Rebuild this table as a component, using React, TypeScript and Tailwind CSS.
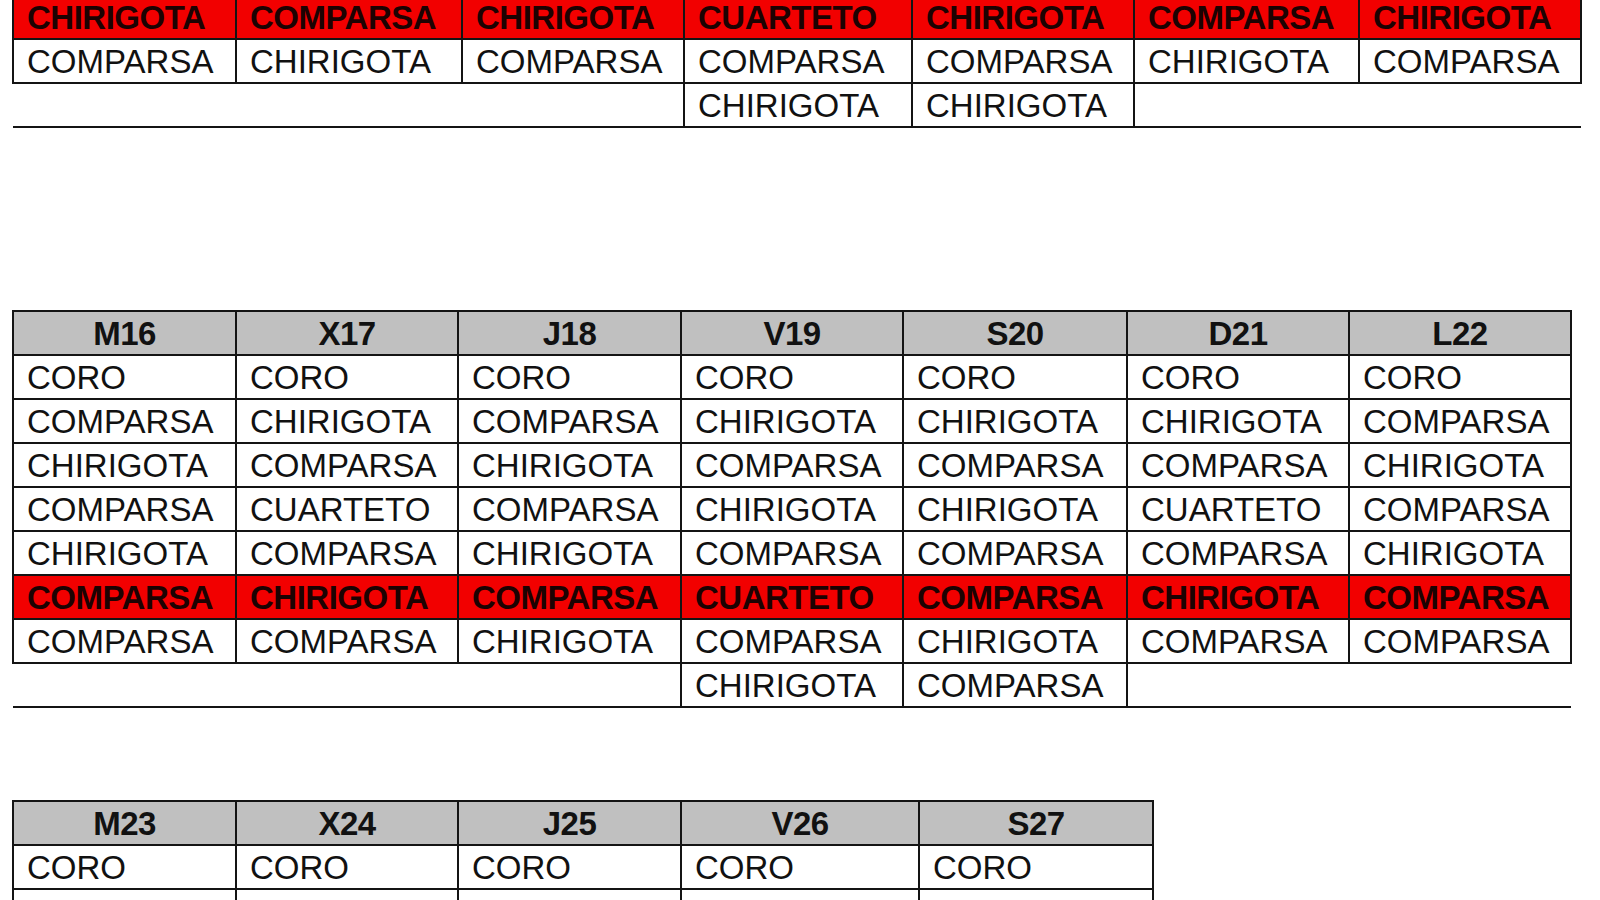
import React from 'react';

type Row = { cells: string[]; kind?: 'head' | 'red' | 'plain' | 'tail' };

interface DayTableProps {
  widths: number[];
  rows: Row[];
  className?: string;
}

const FONT = { fontFamily: '"Liberation Sans", Arial, sans-serif' };

const DayTable: React.FC<DayTableProps> = ({ widths, rows, className }) => {
  return (
    <table className={`border-collapse table-fixed ${className ?? ''}`} style={FONT}>
      <colgroup>
        {widths.map((w, i) => (
          <col key={i} style={{ width: w }} />
        ))}
      </colgroup>
      <tbody>
        {rows.map((row, r) => (
          <tr key={r} className="h-[44px]">
            {row.cells.map((text, c) => {
              if (row.kind === 'tail' && !text) {
                return <td key={c} className="border-b-2 border-[#141414] p-0" />;
              }
              if (row.kind === 'head') {
                return (
                  <td
                    key={c}
                    className="border-2 border-[#141414] bg-[#c0c0c0] p-0 pt-[2px] text-center text-[33px] font-bold leading-[40px] tracking-[-0.5px] text-[#111]"
                  >
                    {text}
                  </td>
                );
              }
              if (row.kind === 'red') {
                return (
                  <td
                    key={c}
                    className="border-2 border-[#141414] bg-[#f20000] p-0 pl-[13px] pt-[2px] whitespace-nowrap text-[33px] font-bold leading-[40px] tracking-[-0.5px] text-[#1c0202]"
                  >
                    {text}
                  </td>
                );
              }
              return (
                <td
                  key={c}
                  className="border-2 border-[#141414] bg-white p-0 pl-[13px] pt-[2px] whitespace-nowrap text-[33px] leading-[40px] text-[#111]"
                >
                  {text}
                </td>
              );
            })}
          </tr>
        ))}
      </tbody>
    </table>
  );
};

const topRows: Row[] = [
  { kind: 'red', cells: ['CHIRIGOTA', 'COMPARSA', 'CHIRIGOTA', 'CUARTETO', 'CHIRIGOTA', 'COMPARSA', 'CHIRIGOTA'] },
  { cells: ['COMPARSA', 'CHIRIGOTA', 'COMPARSA', 'COMPARSA', 'COMPARSA', 'CHIRIGOTA', 'COMPARSA'] },
  { kind: 'tail', cells: ['', '', '', 'CHIRIGOTA', 'CHIRIGOTA', '', ''] },
];

const midRows: Row[] = [
  { kind: 'head', cells: ['M16', 'X17', 'J18', 'V19', 'S20', 'D21', 'L22'] },
  { cells: ['CORO', 'CORO', 'CORO', 'CORO', 'CORO', 'CORO', 'CORO'] },
  { cells: ['COMPARSA', 'CHIRIGOTA', 'COMPARSA', 'CHIRIGOTA', 'CHIRIGOTA', 'CHIRIGOTA', 'COMPARSA'] },
  { cells: ['CHIRIGOTA', 'COMPARSA', 'CHIRIGOTA', 'COMPARSA', 'COMPARSA', 'COMPARSA', 'CHIRIGOTA'] },
  { cells: ['COMPARSA', 'CUARTETO', 'COMPARSA', 'CHIRIGOTA', 'CHIRIGOTA', 'CUARTETO', 'COMPARSA'] },
  { cells: ['CHIRIGOTA', 'COMPARSA', 'CHIRIGOTA', 'COMPARSA', 'COMPARSA', 'COMPARSA', 'CHIRIGOTA'] },
  { kind: 'red', cells: ['COMPARSA', 'CHIRIGOTA', 'COMPARSA', 'CUARTETO', 'COMPARSA', 'CHIRIGOTA', 'COMPARSA'] },
  { cells: ['COMPARSA', 'COMPARSA', 'CHIRIGOTA', 'COMPARSA', 'CHIRIGOTA', 'COMPARSA', 'COMPARSA'] },
  { kind: 'tail', cells: ['', '', '', 'CHIRIGOTA', 'COMPARSA', '', ''] },
];

const lowRows: Row[] = [
  { kind: 'head', cells: ['M23', 'X24', 'J25', 'V26', 'S27'] },
  { cells: ['CORO', 'CORO', 'CORO', 'CORO', 'CORO'] },
  { cells: ['CHIRIGOTA', 'COMPARSA', 'CHIRIGOTA', 'CHIRIGOTA', 'COMPARSA'] },
  { cells: ['COMPARSA', 'CHIRIGOTA', 'COMPARSA', 'COMPARSA', 'CHIRIGOTA'] },
];

export default function App() {
  return (
    <div className="h-[900px] w-[1600px] overflow-hidden bg-white pl-[12px]">
      <DayTable className="-mt-[6px]" widths={[223, 226, 222, 228, 222, 225, 222]} rows={topRows} />
      <DayTable className="mt-[182px]" widths={[223, 222, 223, 222, 224, 222, 222]} rows={midRows} />
      <DayTable className="mt-[92px]" widths={[223, 222, 223, 238, 234]} rows={lowRows} />
    </div>
  );
}
